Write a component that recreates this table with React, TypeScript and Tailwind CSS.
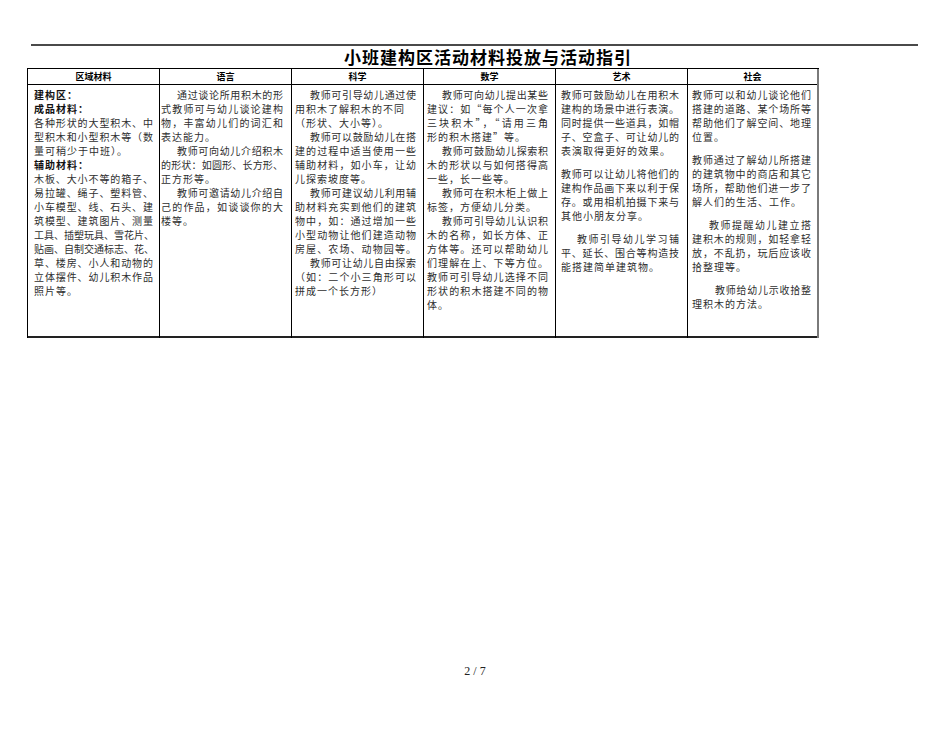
import React from "react";

type Line = { t: string; full?: boolean; ind?: string; bold?: boolean; gap?: boolean };
type Col = { h: string; pad: string; w: string; last?: boolean; lines: Line[] };

const cols: Col[] = [
  {
    h: "区域材料",
    pad: "pl-[6px]",
    w: "w-[119px]",
    lines: [
      { t: "建构区：", bold: true },
      { t: "成品材料：", bold: true },
      { t: "各种形状的大型积木、中", full: true },
      { t: "型积木和小型积木等（数", full: true },
      { t: "量可稍少于中班）。" },
      { t: "辅助材料：", bold: true },
      { t: "木板、大小不等的箱子、", full: true },
      { t: "易拉罐、绳子、塑料管、", full: true },
      { t: "小车模型、线、石头、建", full: true },
      { t: "筑模型、建筑图片、测量", full: true },
      { t: "工具、插塑玩具、雪花片、", full: true },
      { t: "贴画、自制交通标志、花、", full: true },
      { t: "草、楼房、小人和动物的", full: true },
      { t: "立体摆件、幼儿积木作品", full: true },
      { t: "照片等。" },
    ],
  },
  {
    h: "语言",
    pad: "pl-[1px]",
    w: "w-[122px]",
    lines: [
      { t: "通过谈论所用积木的形", full: true, ind: "pl-[16px]" },
      { t: "式教师可与幼儿谈论建构", full: true },
      { t: "物，丰富幼儿们的词汇和", full: true },
      { t: "表达能力。" },
      { t: "教师可向幼儿介绍积木", full: true, ind: "pl-[16px]" },
      { t: "的形状：如圆形、长方形、", full: true },
      { t: "正方形等。" },
      { t: "教师可邀请幼儿介绍自", full: true, ind: "pl-[16px]" },
      { t: "己的作品，如谈谈你的大", full: true },
      { t: "楼等。" },
    ],
  },
  {
    h: "科学",
    pad: "pl-[3px]",
    w: "w-[121px]",
    lines: [
      { t: "教师可引导幼儿通过使", full: true, ind: "pl-[15px]" },
      { t: "用积木了解积木的不同" },
      { t: "（形状、大小等）。" },
      { t: "教师可以鼓励幼儿在搭", full: true, ind: "pl-[15px]" },
      { t: "建的过程中适当使用一些", full: true },
      { t: "辅助材料，如小车，让幼", full: true },
      { t: "儿探索坡度等。" },
      { t: "教师可建议幼儿利用辅", full: true, ind: "pl-[15px]" },
      { t: "助材料充实到他们的建筑", full: true },
      { t: "物中，如：通过增加一些", full: true },
      { t: "小型动物让他们建造动物", full: true },
      { t: "房屋、农场、动物园等。", full: true },
      { t: "教师可让幼儿自由探索", full: true, ind: "pl-[15px]" },
      { t: "（如：二个小三角形可以", full: true },
      { t: "拼成一个长方形）" },
    ],
  },
  {
    h: "数学",
    pad: "pl-[3px]",
    w: "w-[121px]",
    lines: [
      { t: "教师可向幼儿提出某些", full: true, ind: "pl-[15px]" },
      { t: "建议：如“每个人一次拿", full: true },
      { t: "三块积木”，“请用三角", full: true },
      { t: "形的积木搭建”等。" },
      { t: "教师可鼓励幼儿探索积", full: true, ind: "pl-[15px]" },
      { t: "木的形状以与如何搭得高", full: true },
      { t: "一些，长一些等。" },
      { t: "教师可在积木柜上做上", full: true, ind: "pl-[15px]" },
      { t: "标签，方便幼儿分类。" },
      { t: "教师可引导幼儿认识积", full: true, ind: "pl-[15px]" },
      { t: "木的名称，如长方体、正", full: true },
      { t: "方体等。还可以帮助幼儿", full: true },
      { t: "们理解在上、下等方位。", full: true },
      { t: "教师可引导幼儿选择不同", full: true },
      { t: "形状的积木搭建不同的物", full: true },
      { t: "体。" },
    ],
  },
  {
    h: "艺术",
    pad: "pl-[5px]",
    w: "w-[118px]",
    lines: [
      { t: "教师可鼓励幼儿在用积木", full: true },
      { t: "建构的场景中进行表演。", full: true },
      { t: "同时提供一些道具，如帽", full: true },
      { t: "子、空盒子、可让幼儿的", full: true },
      { t: "表演取得更好的效果。" },
      { t: "教师可以让幼儿将他们的", full: true, gap: true },
      { t: "建构作品画下来以利于保", full: true },
      { t: "存。或用相机拍摄下来与", full: true },
      { t: "其他小朋友分享。" },
      { t: "教师引导幼儿学习铺", full: true, ind: "pl-[16px]", gap: true },
      { t: "平、延长、围合等构造技", full: true },
      { t: "能搭建简单建筑物。" },
    ],
  },
  {
    h: "社会",
    pad: "pl-[4px]",
    w: "w-[119px]",
    last: true,
    lines: [
      { t: "教师可以和幼儿谈论他们", full: true },
      { t: "搭建的道路、某个场所等", full: true },
      { t: "帮助他们了解空间、地理", full: true },
      { t: "位置。" },
      { t: "教师通过了解幼儿所搭建", full: true, gap: true },
      { t: "的建筑物中的商店和其它", full: true },
      { t: "场所，帮助他们进一步了", full: true },
      { t: "解人们的生活、工作。" },
      { t: "教师提醒幼儿建立搭", full: true, ind: "pl-[17px]", gap: true },
      { t: "建积木的规则，如轻拿轻", full: true },
      { t: "放，不乱扔，玩后应该收", full: true },
      { t: "拾整理等。" },
      { t: "教师给幼儿示收拾整", full: true, ind: "pl-[23px]", gap: true },
      { t: "理积木的方法。" },
    ],
  },
];

function LineView({ l }: { l: Line }) {
  const cls = [
    "whitespace-nowrap leading-[14px] h-[14px]",
    l.full ? "text-justify [text-align-last:justify]" : "tracking-[1px]",
    l.ind ?? "",
    l.bold ? "font-bold text-[#111]" : "",
    l.gap ? "mt-[9px]" : "",
  ].join(" ");
  return <div className={cls}>{l.t}</div>;
}

export default function App() {
  return (
    <div
      lang="zh-CN"
      className="w-[950px] h-[735px] bg-white text-[#2e2e2e] overflow-hidden"
      style={{ fontFamily: '"Noto Sans CJK SC", "Noto Sans", sans-serif' }}
    >
      <div className="pt-[44px]">
        <div className="ml-[31px] w-[887px] h-[2px] bg-[#4a4a4a]" />
        <div className="h-[22px] flex justify-center pl-[26px]">
          <div className="text-[17px] leading-[22px] font-bold tracking-[1px] text-black">
            小班建构区活动材料投放与活动指引
          </div>
        </div>
        <div className="ml-[27px] w-[792px] flex border-t border-l border-black">
          {cols.map((c, i) => (
            <div
              key={i}
              className={
                c.last
                  ? "w-[131px] flex flex-col border-r-2 border-r-[#7a7a7a]"
                  : "w-[132px] flex flex-col border-r border-black"
              }
            >
              <div className="h-[16px] border-b border-black flex items-center justify-center text-[9px] font-bold text-black leading-[12px]">
                {c.h}
              </div>
              <div className={"h-[253px] border-b-2 border-[#222] pt-[3px] text-[10px] " + c.pad}>
                <div className={c.w}>
                  {c.lines.map((l, j) => (
                    <LineView key={j} l={l} />
                  ))}
                </div>
              </div>
            </div>
          ))}
        </div>
        <div
          className="mt-[326px] text-center text-[12px] leading-[14px] text-[#222]"
          style={{ fontFamily: '"Liberation Serif", serif' }}
        >
          2 / 7
        </div>
      </div>
    </div>
  );
}
